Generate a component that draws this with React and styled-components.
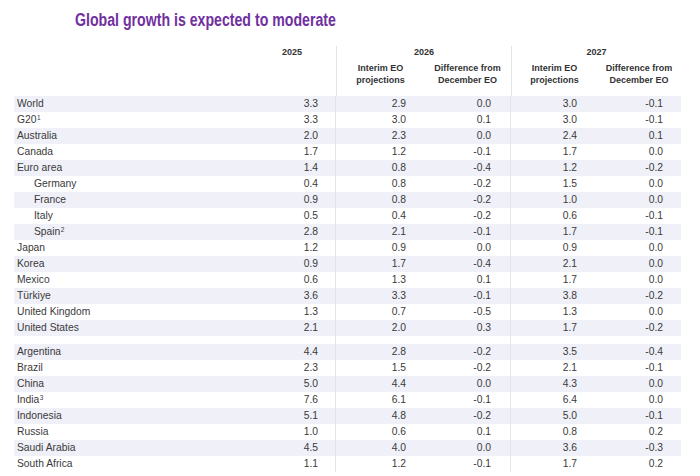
import React from "react";
import styled, { createGlobalStyle } from "styled-components";

const Global = createGlobalStyle`
  html, body { margin: 0; padding: 0; background: #ffffff; }
  body { font-family: "Liberation Sans", Arial, sans-serif; }
`;

const COLS = "234px 88px 88px 87px 86px 84px";
const PADS = [18, 18, 20, 20, 18];
const LINE = "#e4e4e8";

const Page = styled.div`
  width: 700px;
  height: 476px;
  overflow: hidden;
  padding-top: 10px;
  box-sizing: border-box;
`;

const Title = styled.h1`
  margin: 0 0 0 75px;
  font-family: "Liberation Sans", Arial, sans-serif;
  font-weight: 700;
  font-size: 17.5px;
  line-height: 20px;
  color: #7030a0;
  white-space: nowrap;
  transform: scaleX(0.808);
  transform-origin: left center;
`;

const Table = styled.div`
  margin: 16px 0 0 14px;
  width: 667px;
  color: #3a3a3a;
`;

const Header = styled.div`
  display: grid;
  grid-template-columns: ${COLS};
  grid-template-rows: 16px 34px;
  font-size: 9px;
  font-weight: 700;
  color: #333;
`;

const YearCell = styled.div`
  grid-column: ${(p) => p.$span};
  text-align: center;
  line-height: 12px;
  border-left: ${(p) => (p.$sep ? `1px solid ${LINE}` : "none")};
`;

const SubCell = styled.div`
  text-align: center;
  line-height: 12px;
  border-left: ${(p) => (p.$sep ? `1px solid ${LINE}` : "none")};
`;

const Row = styled.div`
  display: grid;
  grid-template-columns: ${COLS};
  height: 16px;
  background: ${(p) => (p.$shade ? "#eff0f8" : "transparent")};
  font-size: 10.3px;
  line-height: 16px;
`;

const Spacer = styled.div`
  display: grid;
  grid-template-columns: ${COLS};
  height: 8px;
`;

const Label = styled.div`
  padding-left: ${(p) => (p.$indent ? 20 : 3)}px;
  white-space: nowrap;
`;

const Value = styled.div`
  text-align: right;
  padding-right: ${(p) => p.$pad}px;
  border-left: ${(p) => (p.$sep ? `1px solid ${LINE}` : "none")};
  margin-left: ${(p) => (p.$sep ? "-1px" : "0")};
`;

const Gap = styled.div`
  border-left: ${(p) => (p.$sep ? `1px solid ${LINE}` : "none")};
  margin-left: ${(p) => (p.$sep ? "-1px" : "0")};
`;

const Sup = styled.span`
  font-size: 6.5px;
  position: relative;
  top: -3.5px;
  margin-left: 0.5px;
`;

const group1 = [
  ["World", "", false, ["3.3", "2.9", "0.0", "3.0", "-0.1"]],
  ["G20", "1", false, ["3.3", "3.0", "0.1", "3.0", "-0.1"]],
  ["Australia", "", false, ["2.0", "2.3", "0.0", "2.4", "0.1"]],
  ["Canada", "", false, ["1.7", "1.2", "-0.1", "1.7", "0.0"]],
  ["Euro area", "", false, ["1.4", "0.8", "-0.4", "1.2", "-0.2"]],
  ["Germany", "", true, ["0.4", "0.8", "-0.2", "1.5", "0.0"]],
  ["France", "", true, ["0.9", "0.8", "-0.2", "1.0", "0.0"]],
  ["Italy", "", true, ["0.5", "0.4", "-0.2", "0.6", "-0.1"]],
  ["Spain", "2", true, ["2.8", "2.1", "-0.1", "1.7", "-0.1"]],
  ["Japan", "", false, ["1.2", "0.9", "0.0", "0.9", "0.0"]],
  ["Korea", "", false, ["0.9", "1.7", "-0.4", "2.1", "0.0"]],
  ["Mexico", "", false, ["0.6", "1.3", "0.1", "1.7", "0.0"]],
  ["Türkiye", "", false, ["3.6", "3.3", "-0.1", "3.8", "-0.2"]],
  ["United Kingdom", "", false, ["1.3", "0.7", "-0.5", "1.3", "0.0"]],
  ["United States", "", false, ["2.1", "2.0", "0.3", "1.7", "-0.2"]],
];

const group2 = [
  ["Argentina", "", false, ["4.4", "2.8", "-0.2", "3.5", "-0.4"]],
  ["Brazil", "", false, ["2.3", "1.5", "-0.2", "2.1", "-0.1"]],
  ["China", "", false, ["5.0", "4.4", "0.0", "4.3", "0.0"]],
  ["India", "3", false, ["7.6", "6.1", "-0.1", "6.4", "0.0"]],
  ["Indonesia", "", false, ["5.1", "4.8", "-0.2", "5.0", "-0.1"]],
  ["Russia", "", false, ["1.0", "0.6", "0.1", "0.8", "0.2"]],
  ["Saudi Arabia", "", false, ["4.5", "4.0", "0.0", "3.6", "-0.3"]],
  ["South Africa", "", false, ["1.1", "1.2", "-0.1", "1.7", "0.2"]],
];

const isSep = (i) => i === 1 || i === 3;

function DataRow({ row, shade }) {
  const [name, sup, indent, vals] = row;
  return (
    <Row $shade={shade}>
      <Label $indent={indent}>
        {name}
        {sup && <Sup>{sup}</Sup>}
      </Label>
      {vals.map((v, i) => (
        <Value key={i} $pad={PADS[i]} $sep={isSep(i)}>
          {v}
        </Value>
      ))}
    </Row>
  );
}

export default function App() {
  return (
    <>
      <Global />
      <Page>
        <Title>Global growth is expected to moderate</Title>
        <Table>
          <Header>
            <YearCell $span="1 / 2" />
            <YearCell $span="2 / 3">2025</YearCell>
            <YearCell $span="3 / 5" $sep>2026</YearCell>
            <YearCell $span="5 / 7" $sep>2027</YearCell>
            <SubCell />
            <SubCell />
            <SubCell $sep>Interim EO<br />projections</SubCell>
            <SubCell>Difference from<br />December EO</SubCell>
            <SubCell $sep>Interim EO<br />projections</SubCell>
            <SubCell>Difference from<br />December EO</SubCell>
          </Header>
          {group1.map((r, i) => (
            <DataRow key={r[0]} row={r} shade={i % 2 === 0} />
          ))}
          <Spacer>
            <Gap />
            <Gap />
            <Gap $sep />
            <Gap />
            <Gap $sep />
            <Gap />
          </Spacer>
          {group2.map((r, i) => (
            <DataRow key={r[0]} row={r} shade={i % 2 === 0} />
          ))}
        </Table>
      </Page>
    </>
  );
}
